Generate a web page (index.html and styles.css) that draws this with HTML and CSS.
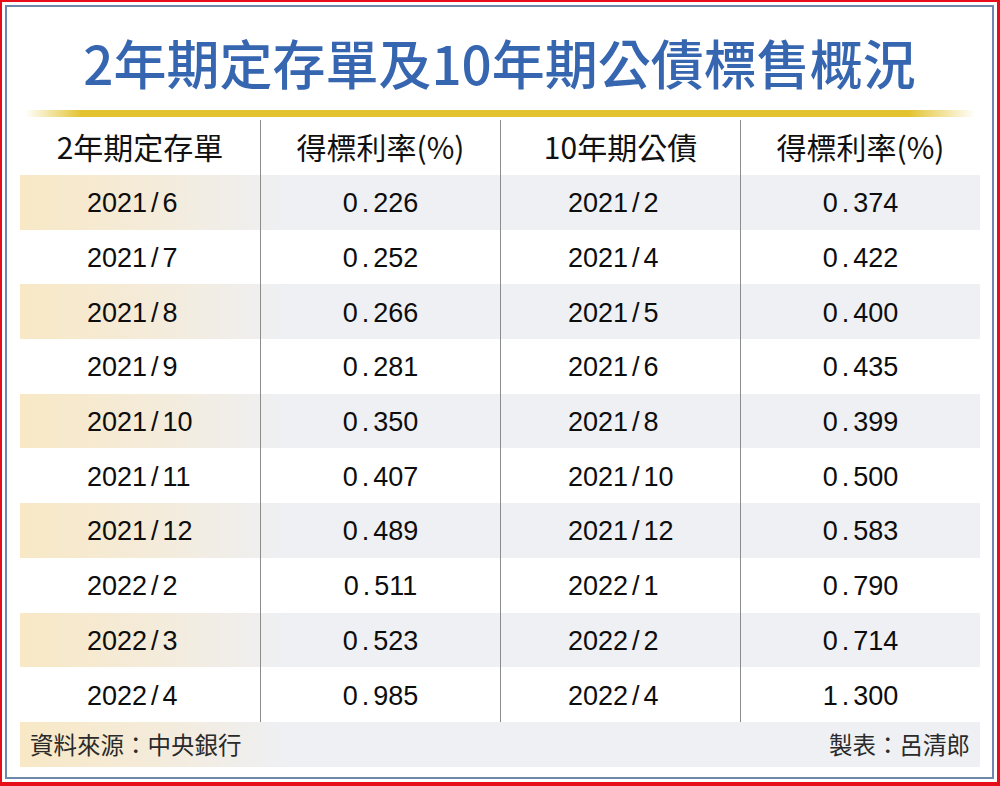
FILE: index.html
```html
<!DOCTYPE html>
<html lang="zh-Hant">
<head>
<meta charset="utf-8">
<title>2年期定存單及10年期公債標售概況</title>
<link rel="stylesheet" href="styles.css">
</head>
<body>
<div class="frame">
  <div class="panel">
    <h1 class="title">2年期定存單及10年期公債標售概況</h1>
    <div class="rule"></div>
    <div class="table">
      <div class="row head">
        <div class="c">2年期定存單</div>
        <div class="c">得標利率(%)</div>
        <div class="c">10年期公債</div>
        <div class="c">得標利率(%)</div>
      </div>
      <div class="row alt">
        <div class="c date">2021<span class="s">/</span>6</div>
        <div class="c num">0<span class="s">.</span>226</div>
        <div class="c date">2021<span class="s">/</span>2</div>
        <div class="c num">0<span class="s">.</span>374</div>
      </div>
      <div class="row">
        <div class="c date">2021<span class="s">/</span>7</div>
        <div class="c num">0<span class="s">.</span>252</div>
        <div class="c date">2021<span class="s">/</span>4</div>
        <div class="c num">0<span class="s">.</span>422</div>
      </div>
      <div class="row alt">
        <div class="c date">2021<span class="s">/</span>8</div>
        <div class="c num">0<span class="s">.</span>266</div>
        <div class="c date">2021<span class="s">/</span>5</div>
        <div class="c num">0<span class="s">.</span>400</div>
      </div>
      <div class="row">
        <div class="c date">2021<span class="s">/</span>9</div>
        <div class="c num">0<span class="s">.</span>281</div>
        <div class="c date">2021<span class="s">/</span>6</div>
        <div class="c num">0<span class="s">.</span>435</div>
      </div>
      <div class="row alt">
        <div class="c date">2021<span class="s">/</span>10</div>
        <div class="c num">0<span class="s">.</span>350</div>
        <div class="c date">2021<span class="s">/</span>8</div>
        <div class="c num">0<span class="s">.</span>399</div>
      </div>
      <div class="row">
        <div class="c date">2021<span class="s">/</span>11</div>
        <div class="c num">0<span class="s">.</span>407</div>
        <div class="c date">2021<span class="s">/</span>10</div>
        <div class="c num">0<span class="s">.</span>500</div>
      </div>
      <div class="row alt">
        <div class="c date">2021<span class="s">/</span>12</div>
        <div class="c num">0<span class="s">.</span>489</div>
        <div class="c date">2021<span class="s">/</span>12</div>
        <div class="c num">0<span class="s">.</span>583</div>
      </div>
      <div class="row">
        <div class="c date">2022<span class="s">/</span>2</div>
        <div class="c num">0<span class="s">.</span>511</div>
        <div class="c date">2022<span class="s">/</span>1</div>
        <div class="c num">0<span class="s">.</span>790</div>
      </div>
      <div class="row alt">
        <div class="c date">2022<span class="s">/</span>3</div>
        <div class="c num">0<span class="s">.</span>523</div>
        <div class="c date">2022<span class="s">/</span>2</div>
        <div class="c num">0<span class="s">.</span>714</div>
      </div>
      <div class="row">
        <div class="c date">2022<span class="s">/</span>4</div>
        <div class="c num">0<span class="s">.</span>985</div>
        <div class="c date">2022<span class="s">/</span>4</div>
        <div class="c num">1<span class="s">.</span>300</div>
      </div>
      <div class="foot">
        <span>資料來源：中央銀行</span>
        <span>製表：呂清郎</span>
      </div>
    </div>
  </div>
</div>
</body>
</html>
```

FILE: styles.css
```css
html, body {
  margin: 0;
  padding: 0;
}

body {
  width: 1000px;
  height: 786px;
  overflow: hidden;
  background: #ffffff;
}

.frame {
  box-sizing: border-box;
  width: 1000px;
  height: 786px;
  border-style: solid;
  border-color: #e60f19;
  border-width: 2px 3px 4px 2px;
  padding: 3px;
  background: #ffffff;
}

.panel {
  box-sizing: border-box;
  height: 100%;
  border: 2px solid #7088ab;
  display: flex;
  flex-direction: column;
}

.title {
  box-sizing: border-box;
  margin: 0;
  height: 103px;
  padding-top: 8px;
  display: flex;
  align-items: center;
  justify-content: center;
  font-family: "Noto Sans CJK TC", "Noto Sans CJK SC", sans-serif;
  font-weight: 500;
  font-size: 53px;
  line-height: 1;
  color: #3766b1;
}

.rule {
  height: 7px;
  margin: 0 17px 0 18px;
  background: linear-gradient(to right,
    rgba(227, 195, 48, 0) 0%,
    #e3c330 6%,
    #e3c330 93%,
    rgba(227, 195, 48, 0) 100%);
}

.table {
  margin: 3px 12px 0 13px;
}

.row {
  display: grid;
  grid-template-columns: repeat(4, 240px);
  height: 54.7px;
}

.row.head {
  height: 55px;
}

.c {
  box-sizing: border-box;
  display: flex;
  align-items: center;
  justify-content: center;
  white-space: nowrap;
}

.c + .c {
  border-left: 1px solid #8c8c8c;
}

.head .c {
  padding-bottom: 3px;
  font-family: "Noto Sans CJK TC", "Noto Sans CJK SC", sans-serif;
  font-size: 30px;
  color: #111111;
}

.date,
.num {
  padding-top: 3px;
  font-family: "Liberation Sans", Arial, sans-serif;
  font-size: 27px;
  color: #0d0d0d;
}

.date {
  justify-content: flex-start;
  padding-left: 67px;
}

.s {
  display: inline-block;
  width: 15.5px;
  text-align: center;
}

.alt,
.foot {
  background: linear-gradient(to right,
    #f8e8c5 0%,
    #f4ebda 14%,
    #eef0f4 28%,
    #eef0f4 100%);
}

.foot {
  box-sizing: border-box;
  height: 45px;
  display: flex;
  justify-content: space-between;
  align-items: center;
  padding: 0 10px;
  font-family: "Noto Sans CJK TC", "Noto Sans CJK SC", sans-serif;
  font-size: 23.5px;
  color: #2a2a2a;
}
```
